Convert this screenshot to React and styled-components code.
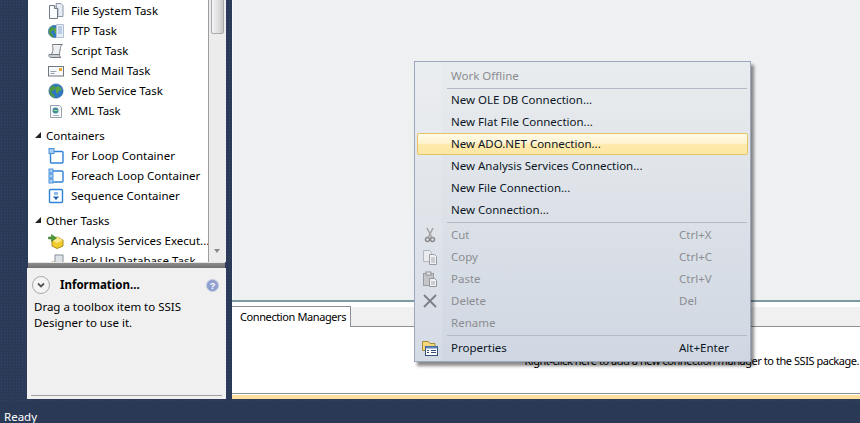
import React from 'react';
import styled, { createGlobalStyle } from 'styled-components';

const GlobalStyle = createGlobalStyle`
  html, body {
    margin: 0;
    padding: 0;
    background: #2a3a56;
    overflow: hidden;
  }
  body {
    font-family: "Noto Sans", "Open Sans", sans-serif;
    font-size: 11.5px;
    color: #000;
  }
`;

const Shell = styled.div`
  position: relative;
  width: 860px;
  height: 423px;
  display: grid;
  grid-template-columns: 27px 199px 6px 1fr;
  grid-template-rows: 399px 24px;
  overflow: hidden;
  background-color: #2a3a56;
  background-image: radial-gradient(#33466a 0.7px, transparent 0.8px);
  background-size: 3px 3px;
`;

const LeftPanel = styled.div`
  grid-column: 2;
  display: flex;
  flex-direction: column;
  min-height: 0;
`;

const Toolbox = styled.div`
  height: 262px;
  display: flex;
  overflow: hidden;
`;

const ToolList = styled.div`
  width: 180px;
  margin-left: 1px;
  padding-top: 1px;
  background: #fff;
  border-right: 1px solid #9a9da1;
  overflow: hidden;
`;

const Row = styled.div`
  height: 20px;
  display: flex;
  align-items: center;
  padding-left: 20px;
  gap: 7px;
  white-space: nowrap;
`;

const RowLabel = styled.span`
  margin-bottom: 2px;
`;

const GroupRow = styled.div`
  height: 20px;
  margin-top: 5px;
  box-sizing: border-box;
  padding: 0 0 2px 7px;
  display: flex;
  align-items: center;
  gap: 5px;
`;

const Triangle = styled.span`
  width: 0;
  height: 0;
  border-left: 6px solid transparent;
  border-bottom: 6px solid #222;
`;

const Scrollbar = styled.div`
  position: relative;
  flex: 1;
  background: #ececec;
`;

const Thumb = styled.div`
  position: absolute;
  left: 2px;
  top: -4px;
  width: 13px;
  height: 38px;
  box-sizing: border-box;
  border: 1px solid #a8abae;
  border-radius: 2px;
  background: linear-gradient(90deg, #f4f4f4, #dcdcdc 60%, #c8c8c8);
`;

const ScrollArrow = styled.span`
  position: absolute;
  left: 5px;
  bottom: 9px;
  border-left: 3.5px solid transparent;
  border-right: 3.5px solid transparent;
  border-top: 4px solid #8a8a8a;
`;

const Splitter = styled.div`
  height: 6px;
  margin: 0 1px;
  box-sizing: border-box;
  border-top: 1px solid #e6e6e6;
  background: linear-gradient(#8c8c8c, #727272);
`;

const InfoPanel = styled.div`
  flex: 1;
  display: flex;
  flex-direction: column;
  background: #f0f0f0;
  padding: 0 4px 3px 7px;
`;

const InfoHead = styled.div`
  height: 34px;
  display: flex;
  align-items: center;
  margin-left: -2px;
  gap: 10px;
`;

const InfoTitle = styled.div`
  flex: 1;
  margin-bottom: 2px;
  font-weight: 700;
`;

const InfoBody = styled.div`
  flex: 1;
  margin-top: -3px;
  line-height: 16px;
  width: 160px;
`;

const InfoRule = styled.div`
  height: 1px;
  margin-left: -3px;
  background: #a0a0a0;
`;

const Main = styled.div`
  grid-column: 4;
  display: flex;
  flex-direction: column;
  min-height: 0;
`;

const Designer = styled.div`
  height: 300px;
  background: #eff0f2;
  border-left: 1px solid #f8f8f8;
`;

const SplitLine = styled.div`
  height: 2px;
  background: #7d9aa3;
`;

const TabStrip = styled.div`
  height: 25px;
  display: flex;
  align-items: flex-end;
  box-sizing: border-box;
  padding-top: 5px;
  border-bottom: 1px solid #8c8f94;
  background: linear-gradient(#fff 0, #fff 5px, #f0f0f0 5px);
`;

const Tab = styled.div`
  width: 119px;
  height: 21px;
  margin-bottom: -1px;
  padding: 0 0 2px 8px;
  box-sizing: border-box;
  display: flex;
  align-items: center;
  font-size: 11px;
  letter-spacing: -0.4px;
  white-space: nowrap;
  background: #fff;
  border: 1px solid #8c8f94;
  border-bottom: 0;
  border-left: 0;
`;

const ManagerArea = styled.div`
  flex: 1;
  display: flex;
  justify-content: flex-end;
  align-items: flex-start;
  padding: 26px 1px 0 0;
  font-size: 11px;
  letter-spacing: -0.45px;
  background: #fff;
  white-space: nowrap;
`;

const YellowEdge = styled.div`
  height: 6px;
  box-sizing: border-box;
  border-top: 1px solid #8c8f94;
  border-bottom: 4px solid #fedf9e;
  background: #fff;
`;

const StatusBar = styled.div`
  grid-column: 1 / -1;
  display: flex;
  align-items: center;
  margin-top: 4px;
  padding: 6px 0 0 4px;
  background: #2a3a56;
  color: #fff;
`;

const Menu = styled.div`
  position: absolute;
  left: 414px;
  top: 61px;
  width: 337px;
  box-sizing: border-box;
  padding: 3px 2px 2px;
  border: 1px solid #9aa7bd;
  background: linear-gradient(#e9ecee, #d0d7e2);
  box-shadow: 3px 4px 3px rgba(0, 0, 0, 0.45);

  &::before {
    content: "";
    position: absolute;
    top: 0;
    bottom: 0;
    left: 0;
    width: 27px;
    background: rgba(255, 255, 255, 0.12);
  }
`;

const MenuRow = styled.div`
  position: relative;
  height: 22px;
  box-sizing: border-box;
  display: grid;
  grid-template-columns: 27px 1fr 68px;
  align-items: center;
  color: ${p => (p.$disabled ? '#8b8d91' : '#0c1626')};
  border: 1px solid ${p => (p.$active ? '#e5c365' : 'transparent')};
  border-radius: 2px;
  background: ${p => (p.$active ? 'linear-gradient(#fffbe8, #fff3cf 45%, #ffe9a9 55%, #ffe8a6)' : 'none')};
`;

const MenuIcon = styled.span`
  display: flex;
  justify-content: center;
  padding-right: 4px;
`;

const MenuLabel = styled.span`
  padding-left: 6px;
  margin-bottom: 2px;
`;

const MenuKey = styled.span`
  margin-bottom: 2px;
`;

const MenuSep = styled.div`
  position: relative;
  height: ${p => p.$h}px;
  margin: 0 1px 0 30px;
  display: flex;
  align-items: center;

  &::after {
    content: "";
    flex: 1;
    height: 1px;
    background: #b4bbc8;
  }
`;

const Svg = ({ children, size = 16 }) => (
  <svg width={size} height={size} viewBox="0 0 16 16" style={{ flex: 'none', display: 'block' }}>
    {children}
  </svg>
);

const FileIcon = () => (
  <Svg>
    <path d="M8 .5h5l2 2v11h-5z" fill="#e8edf3" stroke="#8b97a5" />
    <path d="M1.500 2.500h5l3 3v10h-8z" fill="#fbfcfd" stroke="#6d7a88" />
    <path d="M6.500 2.500v3h3" fill="#cfd8e2" stroke="#6d7a88" />
    <path d="M10.500 5v8" stroke="#c3ccd6" />
  </Svg>
);

const Globe = ({ r = 7.5, cx = 8, cy = 8 }) => (
  <g transform={`translate(${cx - r} ${cy - r}) scale(${r / 8})`}>
    <circle cx="8" cy="8" r="7.6" fill="#2f78c4" stroke="#2a5b8f" strokeWidth=".6" />
    <path d="M5 2c2 1 3 2 2 4S3 7 3 9s2 2 3 3 0 2.500 1 3c-3 0-6-3-6-7 0-3 2-5 4-6z" fill="#4f9b3d" />
    <path d="M10 3c2 0 3.500 2 4 4-1 1-3 0-3.500 2s-1 2-2 1 0-3-1-4 1-3 2.500-3z" fill="#5aa845" />
  </g>
);

const FtpIcon = () => (
  <Svg>
    <Globe r={6.5} cx={6.5} cy={8.5} />
    <path d="M8.500 1.500h7v13h-7z" fill="#e6edf6" stroke="#b3c0d0" />
    <path d="M10 4h4M10 6h4M10 8h4M10 10h4" stroke="#8fb0d6" />
  </Svg>
);

const ScriptIcon = () => (
  <Svg>
    <path d="M4.500 1.500h10c-1.500 1-2 2-2 3s-1 4-1 7H3.500c.5-2 1.500-3 1.500-5.500S4 3 4.500 1.500z" fill="#eef0f2" stroke="#757b84" />
    <path d="M1 11.500h10.500c0 1.500.5 2.500 1.500 3H2.500c-1 0-2-1.500-1.500-3z" fill="#c9cdd2" stroke="#757b84" />
  </Svg>
);

const MailIcon = () => (
  <Svg>
    <rect x=".5" y="3.500" width="15" height="9.500" fill="#f8f9fa" stroke="#6f7680" />
    <rect x="11" y="5" width="3" height="3" fill="#e6a42c" />
    <path d="M2.500 8.500h6M2.500 10.500h4" stroke="#9aa2ac" />
  </Svg>
);

const WebIcon = () => (
  <Svg>
    <Globe />
  </Svg>
);

const XmlIcon = () => (
  <Svg>
    <path d="M2.500 2.500h9l2 2v10h-11z" fill="#f6f8fb" stroke="#98a2ad" />
    <circle cx="7.500" cy="7.500" r="3" fill="#3f8a9c" />
    <path d="M5 12.500h6" stroke="#a9b6c4" />
    <path d="M5.500 7.500h4" stroke="#9fdc7e" />
  </Svg>
);

const ForLoopIcon = () => (
  <Svg>
    <rect x="2.500" y="3.500" width="12.500" height="11.500" rx="1" fill="#fff" stroke="#2f82d8" strokeWidth="1.400" />
    <rect x="1" y="0.500" width="5" height="5" fill="#a9cdf2" stroke="#4d93dc" />
  </Svg>
);

const ForeachIcon = () => (
  <Svg>
    <rect x="3" y="3" width="12" height="11" rx="1" fill="#fff" stroke="#2f82d8" strokeWidth="1.400" />
    <rect x="1" y="1" width="4" height="4" fill="#a9cdf2" stroke="#4d93dc" />
    <rect x="1" y="6" width="4" height="4" fill="#a9cdf2" stroke="#4d93dc" />
    <rect x="1" y="11" width="4" height="4" fill="#a9cdf2" stroke="#4d93dc" />
  </Svg>
);

const SequenceIcon = () => (
  <Svg>
    <rect x="1.500" y="1.500" width="13" height="13" rx="1" fill="#fff" stroke="#2f82d8" strokeWidth="1.400" />
    <rect x="6" y="4" width="4" height="3" fill="#8dbcec" />
    <path d="M5 8.500h6L8 12z" fill="#1f5fa8" />
  </Svg>
);

const AnalysisIcon = () => (
  <Svg>
    <path d="M9 4l6 3v6l-6 2.500L4 13V7z" fill="#f2cd2e" stroke="#a88c1a" />
    <path d="M9 4l6 3-6 3-5-3z" fill="#fbe98a" />
    <path d="M0.500 4h3V1.500L8.500 5 3.500 8.500V6h-3z" fill="#4d9a3a" stroke="#2e6e24" strokeWidth=".5" />
  </Svg>
);

const BackupIcon = () => (
  <Svg>
    <rect x="7" y="2" width="8" height="8" fill="#dfe3e8" stroke="#8a929c" />
    <ellipse cx="5" cy="12" rx="4" ry="3" fill="#d9a93f" stroke="#8f6d1f" />
  </Svg>
);

const CutIcon = () => (
  <Svg>
    <path d="M5 1l4.500 9M11 1L6.500 10" stroke="#a2a2a2" strokeWidth="1.500" fill="none" />
    <circle cx="5.500" cy="12.500" r="2" fill="none" stroke="#8a8a8a" strokeWidth="1.500" />
    <circle cx="10.500" cy="12.500" r="2" fill="none" stroke="#8a8a8a" strokeWidth="1.500" />
  </Svg>
);

const CopyIcon = () => (
  <Svg>
    <path d="M1.500 1.500h6l2 2v9h-8z" fill="#e9ebee" stroke="#b2b5ba" />
    <path d="M7.500 5.500h5l2 2v8h-7z" fill="#f0f1f3" stroke="#9a9da2" />
    <path d="M9 9h4M9 11h4M9 13h4" stroke="#a6a9ae" />
  </Svg>
);

const PasteIcon = () => (
  <Svg>
    <rect x="1.500" y="2.500" width="10" height="12" fill="#c3c5c8" stroke="#999ca0" />
    <rect x="4" y="1" width="5" height="3" fill="#e6e7e9" stroke="#8e9195" />
    <path d="M7.500 7.500h5l2 2v6h-7z" fill="#f0f1f3" stroke="#919499" />
    <path d="M9 11h4M9 13h4" stroke="#a6a9ae" />
  </Svg>
);

const DeleteIcon = () => (
  <Svg>
    <path d="M2 2l12 12M14 2L2 14" stroke="#7c7f84" strokeWidth="1.800" />
  </Svg>
);

const PropertiesIcon = () => (
  <Svg>
    <path d="M.500 1.500h6l1.500 2h5v7h-12.500z" fill="#f2d77d" stroke="#a98c35" />
    <rect x="3.500" y="6.500" width="12" height="9" fill="#fff" stroke="#32527c" />
    <rect x="3.500" y="6.500" width="12" height="2" fill="#5d86bd" />
    <path d="M5 10.500h2M9 10.500h5M5 12.500h2M9 12.500h5" stroke="#33507a" />
  </Svg>
);

const Chevron = () => (
  <svg width="18" height="18" viewBox="0 0 18 18" style={{ flex: 'none', display: 'block' }}>
    <circle cx="9" cy="9" r="8.500" fill="#f4f4f4" stroke="#a9a9a9" />
    <path d="M6 7.500l3 3 3-3" fill="none" stroke="#555" strokeWidth="1.800" />
  </svg>
);

const HelpIcon = () => (
  <svg width="13" height="13" viewBox="0 0 14 14" style={{ flex: 'none', display: 'block', marginRight: 3 }}>
    <circle cx="7" cy="7" r="6.500" fill="#8fa0cf" stroke="#c3cbe2" />
    <text x="7" y="10.500" textAnchor="middle" fontSize="10" fontWeight="700" fill="#fff" fontFamily="Liberation Sans">?</text>
  </svg>
);

const toolsTop = [
  ['File System Task', FileIcon],
  ['FTP Task', FtpIcon],
  ['Script Task', ScriptIcon],
  ['Send Mail Task', MailIcon],
  ['Web Service Task', WebIcon],
  ['XML Task', XmlIcon],
];

const containers = [
  ['For Loop Container', ForLoopIcon],
  ['Foreach Loop Container', ForeachIcon],
  ['Sequence Container', SequenceIcon],
];

const otherTasks = [
  ['Analysis Services Execut...', AnalysisIcon],
  ['Back Up Database Task', BackupIcon],
];

const ToolRows = ({ items }) =>
  items.map(([label, Icon]) => (
    <Row key={label}>
      <Icon />
      <RowLabel>{label}</RowLabel>
    </Row>
  ));

const Item = ({ icon: Icon, shortcut, children, ...rest }) => (
  <MenuRow {...rest}>
    <MenuIcon>{Icon && <Icon />}</MenuIcon>
    <MenuLabel>{children}</MenuLabel>
    <MenuKey>{shortcut}</MenuKey>
  </MenuRow>
);

export default function App() {
  return (
    <Shell>
      <GlobalStyle />
      <LeftPanel>
        <Toolbox>
          <ToolList>
            <ToolRows items={toolsTop} />
            <GroupRow><Triangle />Containers</GroupRow>
            <ToolRows items={containers} />
            <GroupRow><Triangle />Other Tasks</GroupRow>
            <ToolRows items={otherTasks} />
          </ToolList>
          <Scrollbar>
            <Thumb />
            <ScrollArrow />
          </Scrollbar>
        </Toolbox>
        <Splitter />
        <InfoPanel>
          <InfoHead>
            <Chevron />
            <InfoTitle>Information...</InfoTitle>
            <HelpIcon />
          </InfoHead>
          <InfoBody>Drag a toolbox item to SSIS Designer to use it.</InfoBody>
          <InfoRule />
        </InfoPanel>
      </LeftPanel>
      <Main>
        <Designer />
        <SplitLine />
        <TabStrip>
          <Tab>Connection Managers</Tab>
        </TabStrip>
        <ManagerArea>Right-click here to add a new connection manager to the SSIS package.</ManagerArea>
        <YellowEdge />
      </Main>
      <StatusBar>Ready</StatusBar>
      <Menu>
        <Item $disabled>Work Offline</Item>
        <MenuSep $h={2} />
        <Item>New OLE DB Connection...</Item>
        <Item>New Flat File Connection...</Item>
        <Item $active>New ADO.NET Connection...</Item>
        <Item>New Analysis Services Connection...</Item>
        <Item>New File Connection...</Item>
        <Item>New Connection...</Item>
        <MenuSep $h={3} />
        <Item $disabled icon={CutIcon} shortcut="Ctrl+X">Cut</Item>
        <Item $disabled icon={CopyIcon} shortcut="Ctrl+C">Copy</Item>
        <Item $disabled icon={PasteIcon} shortcut="Ctrl+V">Paste</Item>
        <Item $disabled icon={DeleteIcon} shortcut="Del">Delete</Item>
        <Item $disabled>Rename</Item>
        <MenuSep $h={3} />
        <Item icon={PropertiesIcon} shortcut="Alt+Enter">Properties</Item>
      </Menu>
    </Shell>
  );
}
